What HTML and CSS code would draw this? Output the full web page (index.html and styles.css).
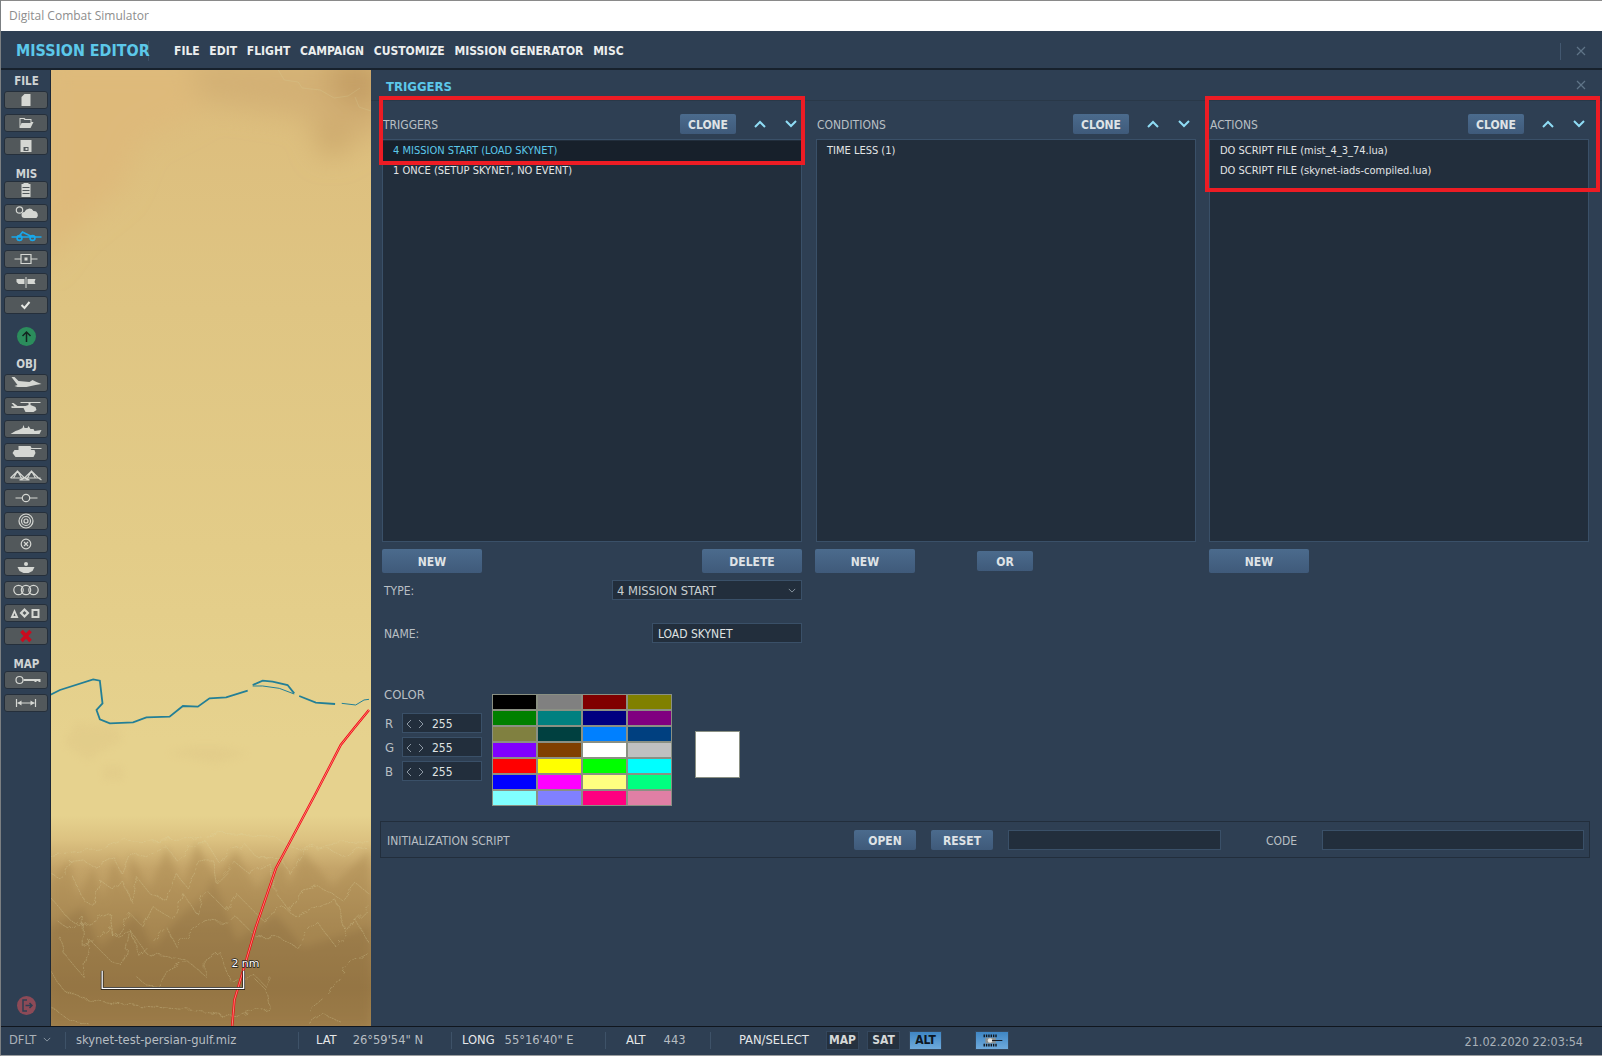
FILE: index.html
```html
<!DOCTYPE html>
<html>
<head>
    <meta charset="utf-8">
    <title>Digital Combat Simulator</title>
    <link rel="stylesheet" href="styles.css">
</head>
<body>
    <div class="titlebar">Digital Combat Simulator</div>
    <div class="header">
        <div class="logo">MISSION EDITOR</div>
        <div class="menu">
            <span>FILE</span><span>EDIT</span><span>FLIGHT</span><span>CAMPAIGN</span><span>CUSTOMIZE</span><span>MISSION GENERATOR</span><span>MISC</span>
        </div>
        <div class="header-close"><svg class="close" viewBox="0 0 10 10"><path d="M1 1l8 8M9 1l-8 8"/></svg></div>
    </div>
    <div class="main">
        <div class="sidebar">
            <div class="side-label first">FILE</div>
            <div class="side-btn"><svg class="icon" viewBox="0 0 43 18"><path d="M20 3h6v12h-9V6z"/></svg></div>
            <div class="side-btn"><svg class="icon" viewBox="0 0 43 18"><path fill-rule="evenodd" d="M15 4h5l1 1h6v3h2l-3 6H15zM16 9v3l1-3h9V6h-6l-1-1h-3z"/></svg></div>
            <div class="side-btn"><svg class="icon" viewBox="0 0 43 18"><path fill-rule="evenodd" d="M16 3h11v12H16zM19 10v4h5v-4zM21 11h2v2h-2z"/></svg></div>
            <div class="side-label">MIS</div>
            <div class="side-btn"><svg class="icon" viewBox="0 0 43 18"><path fill-rule="evenodd" d="M17 3h2V2h5v1h2v13h-9zM18 6v1h7V6zM18 9v1h7V9zM18 12v1h7v-1z"/></svg></div>
            <div class="side-btn"><svg class="icon" viewBox="0 0 43 18"><circle class="line" cx="15" cy="6" r="3.200"/><path d="M20 14a3 3 0 0 1 0-6 5 5 0 0 1 9-1 4 4 0 0 1 3 7z"/></svg></div>
            <div class="side-btn"><svg class="icon route" viewBox="0 0 43 18"><path d="M7 10h30M14 10l4-5 10 5"/><circle cx="15" cy="11" r="2.400"/><circle cx="28" cy="11" r="2.400"/></svg></div>
            <div class="side-btn"><svg class="icon" viewBox="0 0 43 18"><path class="line" d="M10 9h6M27 9h6M16.500 4.500h10v9h-10z"/><rect x="20" y="7.500" width="3" height="3"/></svg></div>
            <div class="side-btn"><svg class="icon" viewBox="0 0 43 18"><path d="M12 6h8v5h-6l-2-2zM21 4h1v11h-1zM23 6h8l-1 3 1 2h-8z"/></svg></div>
            <div class="side-btn"><svg class="icon" viewBox="0 0 43 18"><path class="thick" d="M17 9l3 3 5-6"/></svg></div>
            <div class="round-btn green"><svg viewBox="0 0 19 19"><path d="M9.500 15V5M5.500 9l4-4 4 4"/></svg></div>
            <div class="side-label obj">OBJ</div>
            <div class="side-btn"><svg class="icon" viewBox="0 0 43 18"><path d="M7 3l3 0 4 4 11 1 3-2 4 2 5 2-6 1-9 2-9 0-3-1 3-1-3-4z"/></svg></div>
            <div class="side-btn"><svg class="icon" viewBox="0 0 43 18"><path d="M16 5h20v1H26v2l5 2 1 3-3 2H21l-2-4-12 0V9l3 .5L7 6l2 0 4 3h8l3-1V6h-8z"/></svg></div>
            <div class="side-btn"><svg class="icon" viewBox="0 0 43 18"><path d="M6 14l5-3 3-1 4-2 1-3 1 3h3l1-2 2 3h3l1 2 7-1-2 4z"/></svg></div>
            <div class="side-btn"><svg class="icon" viewBox="0 0 43 18"><path d="M14 3h12l1 2h10v1H27l-1 1h4l1 3-2 4H11l-3-4 2-3h4z"/></svg></div>
            <div class="side-btn"><svg class="icon" viewBox="0 0 43 18"><path class="line" d="M6 12l7-7 7 7 7-7 7 7 3 2M6 12h30M13 5l-4 7M13 5l4 7M27 5l-4 7M27 5l4 7M20 12l-5 2h10z"/></svg></div>
            <div class="side-btn"><svg class="icon" viewBox="0 0 43 18"><path class="line" d="M11 9h7M25 9h8"/><circle class="line" cx="21.500" cy="9" r="3.700"/></svg></div>
            <div class="side-btn"><svg class="icon" viewBox="0 0 43 18"><circle class="line" cx="21.500" cy="9" r="7"/><circle class="line" cx="21.500" cy="9" r="4.500"/><circle class="line" cx="21.500" cy="9" r="2"/></svg></div>
            <div class="side-btn"><svg class="icon" viewBox="0 0 43 18"><circle class="line" cx="21.500" cy="9" r="4.800"/><path class="line" d="M19.500 7l4 4M23.500 7l-4 4"/></svg></div>
            <div class="side-btn"><svg class="icon" viewBox="0 0 43 18"><circle cx="21.500" cy="6" r="2"/><path d="M13 9h17l-2 4-4 2h-5l-4-2z"/></svg></div>
            <div class="side-btn"><svg class="icon" viewBox="0 0 43 18"><circle class="line" cx="14" cy="9" r="4.700"/><circle class="line" cx="21.500" cy="9" r="4.700"/><circle class="line" cx="29" cy="9" r="4.700"/></svg></div>
            <div class="side-btn"><svg class="icon" viewBox="0 0 43 18"><path fill-rule="evenodd" d="M6 14l4-9 4 9zM9 12h2l-1-3zM15 9l5-5 5 5-5 5zM18 9l2 2 2-2-2-2zM27 5h8v9h-8zM29 7v5h4V7z"/></svg></div>
            <div class="side-btn"><svg class="icon cross" viewBox="0 0 43 18"><path d="M17 4l9 10M26 4l-9 10"/></svg></div>
            <div class="side-label">MAP</div>
            <div class="side-btn"><svg class="icon" viewBox="0 0 43 18"><circle class="line" cx="15" cy="9" r="3.500"/><path d="M19 8h17v3h-2v-1h-2v1h-2v-1H19z"/></svg></div>
            <div class="side-btn"><svg class="icon" viewBox="0 0 43 18"><path class="line" d="M12 5v8M31 5v8M13 9h17"/><path d="M13 9l4-2.500v5zM30 9l-4-2.500v5z"/></svg></div>
            <div class="round-btn exit"><svg viewBox="0 0 19 19"><path d="M10 4H6v11h4M8.500 9.500H15M12.500 7l2.500 2.500-2.500 2.500"/></svg></div>
        </div>

        <div class="map">
            <svg class="terrain" viewBox="0 0 321 956" preserveAspectRatio="none">
                <defs>
                    <linearGradient id="ground" x1="0" y1="0" x2="0" y2="1">
                        <stop offset="0" stop-color="#dcbc7c"/>
                        <stop offset="0.25" stop-color="#dfc583"/>
                        <stop offset="0.5" stop-color="#e3cc88"/>
                        <stop offset="0.7" stop-color="#e6d28e"/>
                        <stop offset="0.78" stop-color="#e6d28e"/>
                        <stop offset="0.805" stop-color="#dcc281"/>
                        <stop offset="0.835" stop-color="#c4a469"/>
                        <stop offset="0.9" stop-color="#a68753"/>
                        <stop offset="0.96" stop-color="#9a7a47"/>
                        <stop offset="1" stop-color="#a4844f"/>
                    </linearGradient>
                    <filter id="soft"><feGaussianBlur stdDeviation="12"/></filter>
                    <filter id="softer"><feGaussianBlur stdDeviation="14"/></filter>
                    <filter id="wiggle" x="-5%" y="-5%" width="110%" height="110%">
                        <feTurbulence type="fractalNoise" baseFrequency="0.03" numOctaves="2" seed="4"/>
                        <feDisplacementMap in="SourceGraphic" scale="26"/>
                    </filter>
                </defs>
                <rect width="321" height="956" fill="url(#ground)"/>
                <g filter="url(#softer)">
                    <path d="M140 -10H340V60L290 75 250 45 190 36 130 26z" fill="#d3b074"/>
                    <path d="M-10 -10H140L150 40 90 70 70 120 20 160-10 200z" fill="#deba7a"/>
                    <path d="M280 -10h50v40l-20 10-30-20z" fill="#c39d63"/>
                    <path d="M265 60l15-10 22 20-12 14-18 0z" fill="#cba76b"/>
                </g>
                <g fill="none" stroke="#d7d09a" stroke-width=".5" opacity=".5">
                    <path d="M228 0l6 10 14 2 4 6 18 2 14 8 14-2 12-8"/>
                    <path d="M305 27l4 10 12 4"/>
                </g>
                <g transform="translate(-1 590) scale(.3333)">
                    <g filter="url(#soft)" opacity=".45">
                        <path d="M40 250l40-60 120 10 20 40-110 60zM350 280l80-20 80 0 90 20-100 30zM160 320h60v40h-60z" fill="#dfc786"/>
                    </g>
                    <g filter="url(#soft)" opacity=".42">
                        <path d="M0 660L60 600 80 720 130 620 160 720 190 590 240 700 240 580 300 690 350 560 400 680 440 545 500 660 560 570 620 690 700 600 720 680 760 570 850 680 960 570V1100H0z" fill="#a8874f"/>
                        <path d="M0 800L100 740 150 860 260 760 310 860 400 760 470 700 490 640 560 840 680 760 760 860 960 800V1100H0z" fill="#8f6f3f"/>
                    </g>
                    <g class="contours" filter="url(#wiggle)">
                        <path d="M0 590L80 578 160 565 220 540 280 545 340 540 430 535 520 520 600 525 680 530 720 560 760 565 850 550 960 545"/>
                        <path d="M0 640L30 655 60 605 100 600 130 620 190 590 215 640 240 580 290 590 320 575 350 560 380 600 440 545 470 545 510 610 540 570 590 555 620 590 660 590 700 600 720 640 760 570 830 560 880 590 920 560 960 570"/>
                        <path d="M70 650L100 720 130 740 150 660 190 690 215 660 250 730 260 650 300 700 350 720 380 640 410 680 460 600 490 600 500 670 560 610 600 640 660 610 680 700 720 750 760 690 810 680 880 720 920 670 960 700"/>
                        <path d="M0 710L50 770 90 800 180 760 190 830 240 760 280 800 310 740 370 780 400 700 440 760 470 690 530 750 560 700 640 780 700 740 740 770 860 720 890 810 960 740"/>
                        <path d="M20 780L60 810 100 770 100 860 120 850 180 800 190 830 240 810 270 890 350 800 380 860 460 780 540 790 560 770 620 830 680 830 740 860 800 780 860 860 920 780 960 850"/>
                        <path d="M30 830L50 890 100 950 120 840 180 900 220 920 240 810 290 880 410 900 470 950 470 900 510 875 540 960 620 950 650 980 660 950M780 1050L840 1000 900 910 960 880"/>
                        <path d="M0 930L40 990 120 1020 200 1030 300 1040 420 1050 560 1070 660 1040 650 990 620 960"/>
                        <path d="M260 950L290 975 330 980 360 930 410 905"/>
                        <path d="M0 1040L60 1080 120 1095M780 1090L820 1060 880 1090"/>
                    </g>
                    <g class="river">
                        <path d="M0 105L30 90 130 58 150 62 158 130 140 150 150 178 180 190 250 187 290 172 360 170 400 138 445 140 480 115 530 112 595 92"/>
                        <path d="M610 75L640 62 670 65 715 75 735 100"/>
                        <path d="M750 108L800 128 858 132"/>
                        <path class="thin" d="M735 102L690 85 640 78 610 78M878 130L920 135 945 120 960 118"/>
                    </g>
                    <path class="road" d="M960 150L915 205 875 255 800 400 720 550 680 625 620 800 585 920 555 1020 548 1100"/>
                    <path class="road-core" d="M960 150L915 205 875 255 800 400 720 550 680 625 620 800 585 920 555 1020 548 1100"/>
                    <path class="scale-back" d="M157 932V985H583V932"/>
                    <path class="scale" d="M157 932V985H583V932"/>
                </g>
                <text class="scale-text" x="181" y="897">2 nm</text>
            </svg>
        </div>

        <div class="panel">
            <div class="panel-title">
                <span>TRIGGERS</span>
                <svg class="close" viewBox="0 0 10 10"><path d="M1 1l8 8M9 1l-8 8"/></svg>
            </div>
            <div class="columns">
                <div class="col">
                    <div class="col-head">
                        <span class="label">TRIGGERS</span>
                        <div class="btn clone">CLONE</div>
                        <svg class="chev" viewBox="0 0 14 10"><path d="M2 8l5-5 5 5"/></svg>
                        <svg class="chev" viewBox="0 0 14 10"><path d="M2 2l5 5 5-5"/></svg>
                    </div>
                    <div class="list">
                        <div class="item selected">4 MISSION START (LOAD SKYNET)</div>
                        <div class="item">1 ONCE (SETUP SKYNET, NO EVENT)</div>
                    </div>
                    <div class="col-actions">
                        <div class="btn big">NEW</div>
                        <div class="btn big">DELETE</div>
                    </div>
                </div>
                <div class="col">
                    <div class="col-head">
                        <span class="label">CONDITIONS</span>
                        <div class="btn clone">CLONE</div>
                        <svg class="chev" viewBox="0 0 14 10"><path d="M2 8l5-5 5 5"/></svg>
                        <svg class="chev" viewBox="0 0 14 10"><path d="M2 2l5 5 5-5"/></svg>
                    </div>
                    <div class="list">
                        <div class="item">TIME LESS (1)</div>
                    </div>
                    <div class="col-actions">
                        <div class="btn big">NEW</div>
                        <div class="btn or">OR</div>
                    </div>
                </div>
                <div class="col">
                    <div class="col-head">
                        <span class="label">ACTIONS</span>
                        <div class="btn clone">CLONE</div>
                        <svg class="chev" viewBox="0 0 14 10"><path d="M2 8l5-5 5 5"/></svg>
                        <svg class="chev" viewBox="0 0 14 10"><path d="M2 2l5 5 5-5"/></svg>
                    </div>
                    <div class="list">
                        <div class="item">DO SCRIPT FILE (mist_4_3_74.lua)</div>
                        <div class="item">DO SCRIPT FILE (skynet-iads-compiled.lua)</div>
                    </div>
                    <div class="col-actions">
                        <div class="btn big">NEW</div>
                    </div>
                </div>
            </div>

            <div class="form">
                <div class="form-row type-row">
                    <span class="label">TYPE:</span>
                    <div class="field select">4 MISSION START<svg class="select-arrow" viewBox="0 0 10 6"><path d="M1 1l4 4 4-4"/></svg></div>
                </div>
                <div class="form-row name-row">
                    <span class="label">NAME:</span>
                    <div class="field name">LOAD SKYNET</div>
                </div>
                <div class="color-row">
                    <div class="rgb">
                        <div class="label color-label">COLOR</div>
                        <div class="rgb-row"><span class="label">R</span><div class="field spin"><svg viewBox="0 0 20 10"><path d="M6 1L2 5l4 4M14 1l4 4-4 4"/></svg>255</div></div>
                        <div class="rgb-row"><span class="label">G</span><div class="field spin"><svg viewBox="0 0 20 10"><path d="M6 1L2 5l4 4M14 1l4 4-4 4"/></svg>255</div></div>
                        <div class="rgb-row"><span class="label">B</span><div class="field spin"><svg viewBox="0 0 20 10"><path d="M6 1L2 5l4 4M14 1l4 4-4 4"/></svg>255</div></div>
                    </div>
                    <div class="swatches">
                        <i class="s-black"></i><i class="s-gray"></i><i class="s-maroon"></i><i class="s-olive"></i>
                        <i class="s-green"></i><i class="s-teal"></i><i class="s-navy"></i><i class="s-purple"></i>
                        <i class="s-khaki"></i><i class="s-pine"></i><i class="s-azure"></i><i class="s-cobalt"></i>
                        <i class="s-violet"></i><i class="s-brown"></i><i class="s-white"></i><i class="s-silver"></i>
                        <i class="s-red"></i><i class="s-yellow"></i><i class="s-lime"></i><i class="s-cyan"></i>
                        <i class="s-blue"></i><i class="s-magenta"></i><i class="s-lemon"></i><i class="s-spring"></i>
                        <i class="s-aqua"></i><i class="s-periwinkle"></i><i class="s-rose"></i><i class="s-pink"></i>
                    </div>
                    <div class="preview"></div>
                </div>
                <div class="init">
                    <span class="label init-label">INITIALIZATION SCRIPT</span>
                    <div class="btn init-btn">OPEN</div>
                    <div class="btn init-btn">RESET</div>
                    <div class="field script"></div>
                    <span class="label code-label">CODE</span>
                    <div class="field code"></div>
                </div>
            </div>

            <div class="mark mark-triggers"></div>
            <div class="mark mark-actions"></div>
        </div>
    </div>
    <div class="statusbar">
        <div class="seg seg-theme">DFLT<svg class="select-arrow" viewBox="0 0 10 6"><path d="M1 1l4 4 4-4"/></svg></div>
        <div class="seg seg-file">skynet-test-persian-gulf.miz</div>
        <div class="seg seg-lat"><b>LAT</b><span>26°59'54" N</span></div>
        <div class="seg seg-long"><b>LONG</b><span>55°16'40" E</span></div>
        <div class="seg seg-alt"><b>ALT</b><span>443</span></div>
        <div class="pan">PAN/SELECT</div>
        <div class="mode">MAP</div>
        <div class="mode sat">SAT</div>
        <div class="mode on">ALT</div>
        <div class="mode on tank"><svg viewBox="0 0 34 18"><path class="tread" d="M8 4h15M8 14h15"/><path d="M10 6h11v6H10z" fill="#8a8f8f"/><circle cx="15" cy="9" r="2.500" fill="#dfe3e3"/><path d="M17 8.500h11v1H17z"/></svg></div>
        <div class="clock">21.02.2020 22:03:54</div>
    </div>
</body>
</html>
```

FILE: styles.css
```css
* { box-sizing: border-box; }
body { margin: 0; width: 1602px; height: 1056px; overflow: hidden; background-color: #2e3f53; color: #d9dcdc; font-family: "DejaVu Sans Condensed", "DejaVu Sans", sans-serif; font-stretch: condensed; font-size: 11px; display: flex; flex-direction: column; border-left: 1px solid #7b7f82; border-bottom: 1px solid #9a9d9f; }

.titlebar { height: 31px; flex: none; background-color: #ffffff; color: #8d8d8d; font-family: "Open Sans", sans-serif; font-stretch: normal; font-size: 12px; line-height: 30px; padding-left: 8px; border-top: 1px solid #8a8a8a; }

.header { height: 39px; flex: none; display: flex; align-items: center; border-bottom: 2px solid #17212c; padding-top: 3px; }
.logo { width: 148px; padding-left: 15px; height: 20px; line-height: 20px; font-size: 15.900px; font-weight: bold; color: #5cc8ea; white-space: nowrap; border-right: 1px solid #3c4f66; }
.menu { display: flex; gap: 9.700px; margin-left: 25px; font-size: 12px; font-weight: bold; color: #eceeee; }
.header-close { margin-left: auto; height: 17px; width: 42px; border-left: 1px solid #435870; display: flex; align-items: center; padding-left: 15px; }
.close { width: 10px; height: 10px; fill: none; stroke: #5f7488; stroke-width: 1.2; }

.main { flex: 1; display: flex; min-height: 0; }

.sidebar { width: 50px; flex: none; display: flex; flex-direction: column; align-items: flex-start; padding-left: 3px; border-right: 1px solid #1c2836; }
.side-label { width: 45px; height: 26px; padding-top: 12px; line-height: 14px; text-align: center; font-size: 11.500px; font-weight: bold; color: #cfd3d4; }
.side-label.first { height: 21px; padding-top: 4px; }
.side-label.obj { height: 18px; padding-top: 1px; margin-top: 11px; }
.side-btn { width: 44px; height: 18px; margin-bottom: 5px; background-color: #52585b; border: 1px solid #252f3b; border-radius: 3px; display: flex; }
.side-btn + .side-label { margin-top: -5px; }
.round-btn + .side-label.obj { margin-top: 10px; }
.icon { width: 44px; height: 18px; margin: -1px; flex: none; fill: #d5d7d3; }
.icon .line { fill: none; stroke: #d5d7d3; stroke-width: 1.2; }
.icon .thick { fill: none; stroke: #e6e8e4; stroke-width: 2; }
.icon.route { fill: none; stroke: #18a7ea; stroke-width: 1.7; }
.icon.cross { fill: none; stroke: #cc0a1e; stroke-width: 3.5; }
.round-btn { width: 19px; height: 19px; margin-left: 13px; border-radius: 50%; }
.round-btn svg { display: block; fill: none; stroke-width: 1.500; }
.green { background-color: #2b8d5c; margin-top: 8px; }
.green svg { stroke: #13241f; }
.exit { background-color: #8c4a57; margin-top: auto; margin-bottom: 11px; }
.exit svg { stroke: #2e3f53; }

.map { width: 320px; flex: none; overflow: hidden; background-color: #e5d18d; }
.terrain { display: block; width: 100%; height: 100%; }
.contours path { fill: none; stroke: #ded7a6; stroke-width: 1.800; stroke-dasharray: 7 2; opacity: .5; }
.river path { fill: none; stroke: #237f96; stroke-width: 5.500; }
.river path.thin { stroke-width: 3; }
.road { fill: none; stroke: #f4000c; stroke-width: 7; }
.road-core { fill: none; stroke: #f7b0a0; stroke-width: 2.200; }
.scale-back { fill: none; stroke: #111111; stroke-width: 8; }
.scale { fill: none; stroke: #ffffff; stroke-width: 4; }
.scale-text { font-family: "DejaVu Sans", sans-serif; font-stretch: normal; font-size: 11px; fill: #ffffff; stroke: #222222; stroke-width: 1.500; paint-order: stroke; }

.panel { flex: 1; position: relative; padding: 0 12px 0 9px; min-width: 0; }
.panel-title { height: 31px; margin-left: -9px; margin-right: -12px; padding: 3px 16px 0 15px; display: flex; align-items: center; justify-content: space-between; border-bottom: 1px solid #293848; font-size: 13px; font-weight: bold; color: #5cc8ea; }
.panel-title .close { margin-top: -3px; }

.label { color: #b9bfc4; font-size: 12px; white-space: nowrap; padding-top: 1px; }
.columns { display: grid; grid-template-columns: 420px 380px 379px; gap: 14px; margin-left: 2px; }
.col:last-child { margin-left: -1px; }
.col-head { display: flex; align-items: center; height: 20px; margin-top: 13px; padding-right: 4px; }
.col:nth-child(2) .col-head { padding-right: 5px; }
.col:last-child .col-head { padding-right: 3px; }
.col:nth-child(2) .col-actions { margin-left: -1px; }
.col-head .label { flex: 1; padding-left: 1px; }
.chev { width: 14px; height: 10px; margin-left: 17px; fill: none; stroke: #8fdcf5; stroke-width: 2; }
.list { height: 403px; margin-top: 5px; background-color: #222e3c; border: 1px solid #3a5068; padding-top: 1px; }
.item { height: 20px; line-height: 19px; padding-left: 10px; font-size: 11px; color: #e2e5e6; white-space: nowrap; }
.item.selected { background-color: #17202b; color: #5cc8ea; }
.col-actions { display: flex; justify-content: space-between; align-items: center; margin-top: 7px; height: 24px; }

.btn { display: flex; align-items: center; justify-content: center; padding-top: 1px; font-weight: bold; font-size: 12px; color: #dfe3e6; background: linear-gradient(#4b6b8d, #3f5a7a); border-radius: 2px; }
.clone { width: 56px; height: 20px; }
.big { width: 100px; height: 24px; }
.or { width: 56px; height: 20px; margin-left: 62px; margin-right: auto; }

.form { margin-left: 2px; }
.form-row { width: 420px; display: flex; align-items: center; justify-content: space-between; height: 20px; padding-left: 2px; }
.type-row { margin-top: 7px; }
.name-row { margin-top: 23px; }
.field { height: 20px; padding-top: 1px; background-color: #222e3c; border: 1px solid #3a5068; color: #dfe2e3; font-size: 12px; line-height: 18px; white-space: nowrap; }
.select { width: 190px; padding-left: 4px; font-size: 12.800px; color: #c9ced1; display: flex; align-items: center; justify-content: space-between; padding-right: 5px; }
.select-arrow { width: 8px; height: 5px; fill: none; stroke: #8a97a3; stroke-width: 1.200; }
.name { width: 150px; padding-left: 5px; }

.color-row { display: flex; margin-top: 45px; }
.rgb { width: 100px; padding-left: 2px; }
.color-label { height: 14px; line-height: 14px; font-size: 13px; margin-bottom: 11px; padding-top: 0; }
.rgb-row { display: flex; align-items: center; height: 20px; margin-bottom: 4px; justify-content: space-between; }
.rgb-row .label { font-size: 13px; padding-left: 1px; }
.spin { width: 80px; display: flex; align-items: center; }
.spin svg { width: 20px; height: 10px; margin: 0 7px 0 2px; fill: none; stroke: #8c98a4; stroke-width: 1; }

.swatches { margin: 6px 0 0 10px; width: 180px; height: 112px; display: grid; grid-template-columns: repeat(4, 45px); grid-auto-rows: 16px; background-color: #7d8478; }
.swatches i { display: block; border: 1px solid #8a9083; }
.s-black { background-color: #000000; }
.s-gray { background-color: #808080; }
.s-maroon { background-color: #800000; }
.s-olive { background-color: #808000; }
.s-green { background-color: #008000; }
.s-teal { background-color: #008080; }
.s-navy { background-color: #000080; }
.s-purple { background-color: #800080; }
.s-khaki { background-color: #808040; }
.s-pine { background-color: #004040; }
.s-azure { background-color: #0080ff; }
.s-cobalt { background-color: #004080; }
.s-violet { background-color: #8000ff; }
.s-brown { background-color: #804000; }
.s-white { background-color: #ffffff; }
.s-silver { background-color: #c0c0c0; }
.s-red { background-color: #ff0000; }
.s-yellow { background-color: #ffff00; }
.s-lime { background-color: #00ff00; }
.s-cyan { background-color: #00ffff; }
.s-blue { background-color: #0000ff; }
.s-magenta { background-color: #ff00ff; }
.s-lemon { background-color: #ffff80; }
.s-spring { background-color: #00ff80; }
.s-aqua { background-color: #80ffff; }
.s-periwinkle { background-color: #8080ff; }
.s-rose { background-color: #ff0080; }
.s-pink { background-color: #e07fa5; }
.preview { width: 45px; height: 47px; margin: 43px 0 0 23px; background-color: #ffffff; border: 1px solid #8a9083; }

.init { height: 37px; width: 1210px; margin: 15px 0 0 -2px; border: 1px solid #222e3c; display: flex; align-items: center; }
.init-label { width: 473px; padding-left: 6px; padding-top: 2px; }
.init-btn { width: 62px; height: 20px; margin-right: 15px; padding-top: 2px; }
.script { width: 213px; }
.code-label { margin-left: 45px; width: 56px; font-size: 12px; padding-top: 2px; }
.code { width: 262px; }

.mark { position: absolute; border: 4px solid #ed1c24; pointer-events: none; }
.mark-triggers { left: 8px; top: 26px; width: 426px; height: 69px; }
.mark-actions { left: 834px; top: 26px; width: 395px; height: 96px; }

.statusbar { height: 29px; flex: none; display: flex; align-items: center; padding-bottom: 2px; border-top: 1px solid #10161e; font-size: 12.800px; color: #c4c9cc; }
.seg { height: 17px; line-height: 15px; padding-bottom: 2px; display: flex; align-items: center; border-right: 1px solid #3e5268; white-space: nowrap; }
.seg b { font-weight: normal; color: #e6e8e9; }
.seg-theme { width: 65px; padding-left: 8px; gap: 7px; color: #a9b1b8; }
.seg-file { width: 233px; padding-left: 10px; color: #b7bdc2; }
.seg-lat { width: 153px; padding-left: 17px; }
.seg-lat span { margin-left: 16px; color: #b7bdc2; }
.seg-long { width: 154px; padding-left: 10px; }
.seg-long span { margin-left: 10px; color: #b7bdc2; }
.seg-alt { width: 105px; padding-left: 20px; }
.seg-alt span { margin-left: 18px; color: #b7bdc2; }
.pan { margin-left: 28px; width: 87px; padding-bottom: 2px; color: #e6e8e9; white-space: nowrap; }
.mode { width: 33px; height: 19px; margin-right: 8px; line-height: 16px; text-align: center; font-weight: bold; font-size: 12px; color: #d5d8d8; background-color: #25313f; border: 1px solid #34475d; }
.mode.sat { margin-right: 9px; }
.mode.on { background: linear-gradient(#3f86c4, #6eaadc); color: #0d1622; }
.tank { margin-left: 25px; width: 34px; display: flex; }
.tank svg { width: 32px; height: 17px; fill: #10161e; }
.tank .tread { fill: none; stroke: #10161e; stroke-width: 3; stroke-dasharray: 1.500 1; }
.clock { margin-left: auto; margin-right: 19px; padding-top: 3px; font-size: 12.500px; color: #a9b1b8; white-space: nowrap; }
```
